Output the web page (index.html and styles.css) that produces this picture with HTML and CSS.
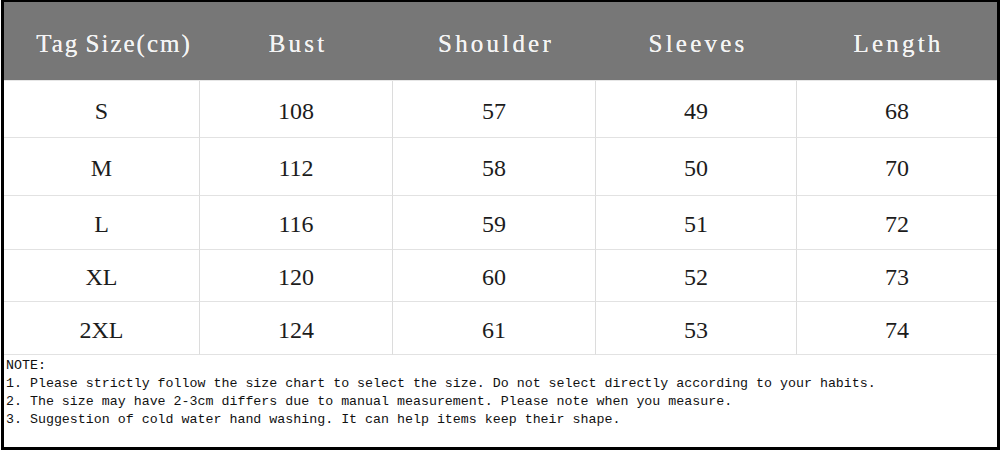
FILE: index.html
```html
<!DOCTYPE html>
<html>
<head>
<meta charset="utf-8">
<link rel="stylesheet" href="styles.css">
</head>
<body>
<div class="chart">
  <div class="grid">
    <div class="hd first">Tag Size(cm)</div>
    <div class="hd">Bust</div>
    <div class="hd">Shoulder</div>
    <div class="hd">Sleeves</div>
    <div class="hd last">Length</div>

    <div class="c r1">S</div><div class="c r1">108</div><div class="c r1">57</div><div class="c r1">49</div><div class="c r1 last">68</div>
    <div class="c r2">M</div><div class="c r2">112</div><div class="c r2">58</div><div class="c r2">50</div><div class="c r2 last">70</div>
    <div class="c r3">L</div><div class="c r3">116</div><div class="c r3">59</div><div class="c r3">51</div><div class="c r3 last">72</div>
    <div class="c r4">XL</div><div class="c r4">120</div><div class="c r4">60</div><div class="c r4">52</div><div class="c r4 last">73</div>
    <div class="c r5">2XL</div><div class="c r5">124</div><div class="c r5">61</div><div class="c r5">53</div><div class="c r5 last">74</div>
  </div>
  <div class="notes">
    <div>NOTE:</div>
    <div>1. Please strictly follow the size chart to select the size. Do not select directly according to your habits.</div>
    <div>2. The size may have 2-3cm differs due to manual measurement. Please note when you measure.</div>
    <div>3. Suggestion of cold water hand washing. It can help items keep their shape.</div>
  </div>
</div>
</body>
</html>
```

FILE: styles.css
```css
html, body {
  margin: 0;
  padding: 0;
  background: #ffffff;
}
.chart {
  box-sizing: border-box;
  margin-left: 1px;
  width: 999px;
  height: 450px;
  border: 3px solid #000;
  border-top-width: 2px;
  display: flex;
  flex-direction: column;
  background: #fff;
}
.grid {
  display: grid;
  grid-template-columns: 196px 193px 203px 201px 200px;
  grid-template-rows: 79px 57px 58px 54px 52px 53px;
}
.hd {
  background: #777777;
  color: #f4f4f4;
  font-family: "Liberation Serif", serif;
  font-size: 25px;
  letter-spacing: 3.2px;
  text-shadow: 0 0 0.4px #f4f4f4;
  display: flex;
  align-items: center;
  justify-content: center;
  padding-top: 6px;
  padding-left: 3px;
  box-sizing: border-box;
  border-bottom: 1px solid #e6e6e6;
}
.hd.first {
  letter-spacing: 2px;
  word-spacing: -2px;
  padding-left: 24px;
  white-space: nowrap;
}
.c {
  box-sizing: border-box;
  border-right: 1px solid #dcdcdc;
  border-bottom: 1px solid #e2e2e2;
  display: flex;
  align-items: center;
  justify-content: center;
  padding-top: 4px;
  font-family: "Liberation Serif", serif;
  font-size: 24px;
  color: #1c1c1c;
}
.c.last {
  border-right: none;
}
.notes {
  flex: 1;
  padding: 2px 0 0 2px;
  font-family: "Liberation Mono", monospace;
  font-size: 13.3px;
  line-height: 18px;
  color: #111;
  white-space: nowrap;
}
```
